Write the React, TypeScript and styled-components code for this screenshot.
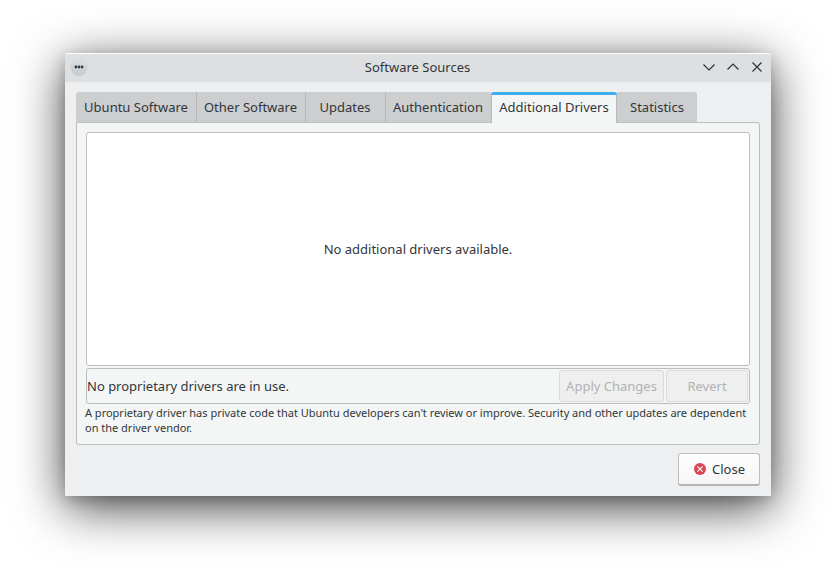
import React from "react";
import styled, { createGlobalStyle, css } from "styled-components";

const GlobalStyle = createGlobalStyle`
  * { box-sizing: border-box; }
  body {
    margin: 0;
    background: #fff;
    color: #31363b;
    font: 13px/18px "Noto Sans", sans-serif;
    overflow: hidden;
  }
  button { font: inherit; color: inherit; }
`;

const Desktop = styled.div`
  height: 573px;
  padding: 53px 65px 77px;
`;

const Window = styled.main`
  width: 706px;
  height: 443px;
  display: flex;
  flex-direction: column;
  border-radius: 4px 4px 0 0;
  background: #eeeff1;
  box-shadow: 0 11px 50px rgba(0, 0, 0, 0.75), 0 4px 14px rgba(0, 0, 0, 0.18);
`;

const TitleBar = styled.header`
  height: 29px;
  flex: none;
  display: grid;
  grid-template-columns: 80px 1fr 80px;
  align-items: center;
  padding: 0 6px 2px 5px;
  border-top: 1px solid #fff;
  border-radius: 4px 4px 0 0;
  background: #dedfe1;
`;

const Title = styled.h1`
  margin: 0;
  font-size: 13px;
  font-weight: 400;
  text-align: center;
`;

const AppMenu = styled.svg`
  display: block;
`;

const WindowControls = styled.div`
  display: flex;
  justify-content: flex-end;
  gap: 8px;
`;

const ControlIcon = styled.svg`
  width: 16px;
  height: 16px;
  fill: none;
  stroke: #2b3035;
  stroke-width: 1.15;
`;

const Body = styled.div`
  flex: 1;
  display: flex;
  flex-direction: column;
  padding: 10px 11px 0;
`;

const TabBar = styled.nav`
  display: flex;
  height: 31px;
  margin-bottom: -1px;
  z-index: 1;
`;

const Tab = styled.button<{ $width: number; $active?: boolean; $divider?: boolean }>`
  width: ${(p) => p.$width}px;
  height: 30px;
  padding: 0 1px 0 0;
  border: 0;
  border-right: ${(p) => (p.$divider ? "1px solid #b4b6b8" : "0")};
  background: #cdced0;
  white-space: nowrap;
  &:first-child { padding: 0; border-top-left-radius: 3px; }
  &:last-child { padding: 0; border-top-right-radius: 3px; }
  ${(p) =>
    p.$active &&
    css`
      height: 31px;
      padding: 0 0 1px;
      border-radius: 3px 3px 0 0;
      background:
        linear-gradient(#3daee9, #3daee9) top / 100% 3px no-repeat,
        linear-gradient(#b9bbbc, #b9bbbc) left / 1px 100% no-repeat,
        linear-gradient(#b9bbbc, #b9bbbc) right / 1px 100% no-repeat,
        #f4f6f5;
    `}
`;

const Pane = styled.section`
  height: 323px;
  display: flex;
  flex-direction: column;
  padding: 9px;
  border: 1px solid #bcbebf;
  border-radius: 0 3px 3px 3px;
  background: #f4f6f5;
`;

const DriverList = styled.div`
  height: 234px;
  flex: none;
  display: flex;
  align-items: center;
  justify-content: center;
  border: 1px solid #bbbdbe;
  border-radius: 3px;
  background: #fff;
`;

const StatusRow = styled.div`
  height: 36px;
  flex: none;
  margin-top: 2px;
  display: flex;
  align-items: center;
  gap: 2px;
  padding-right: 1px;
  border: 1px solid #bbbdbe;
  border-radius: 3px;
`;

const Status = styled.span`
  flex: 1;
`;

const ActionButton = styled.button<{ $width: number }>`
  width: ${(p) => p.$width}px;
  height: 32px;
  padding: 0;
  border: 1px solid #d9dbdb;
  border-radius: 3px;
  background: #efefef;
  white-space: nowrap;
  &:disabled { color: #b0b2b3; }
`;

const Note = styled.p`
  margin: 1px -1px 0;
  font-size: 11px;
  line-height: 15px;
  letter-spacing: -0.008px;
  white-space: nowrap;
`;

const Footer = styled.footer`
  display: flex;
  justify-content: flex-end;
  margin-top: 8px;
`;

const CloseButton = styled.button`
  width: 82px;
  height: 33px;
  display: flex;
  align-items: center;
  gap: 6px;
  padding: 0 0 0 15px;
  border: 1px solid #bcbebf;
  border-bottom: 2px solid #b3b5b6;
  border-radius: 3px;
  background: linear-gradient(#fdfdfd, #f6f6f7);
`;

const tabs = [
  { label: "Ubuntu Software", width: 121, divider: true },
  { label: "Other Software", width: 109, divider: true },
  { label: "Updates", width: 80, divider: true },
  { label: "Authentication", width: 105 },
  { label: "Additional Drivers", width: 126, active: true },
  { label: "Statistics", width: 80 },
];

export default function App() {
  return (
    <Desktop>
      <GlobalStyle />
      <Window>
        <TitleBar>
          <AppMenu width="18" height="18" viewBox="0 0 18 18">
            <defs>
              <linearGradient id="disc" x1="0" y1="0" x2="0" y2="1">
                <stop offset="0" stopColor="#dbe0e2" />
                <stop offset="1" stopColor="#c3cacf" />
              </linearGradient>
            </defs>
            <circle cx="9" cy="9" r="8.7" fill="url(#disc)" />
            <circle cx="5.9" cy="9" r="1.4" fill="#34383c" />
            <circle cx="9" cy="9" r="1.4" fill="#34383c" />
            <circle cx="12.1" cy="9" r="1.4" fill="#34383c" />
          </AppMenu>
          <Title>Software Sources</Title>
          <WindowControls>
            <ControlIcon viewBox="0 0 16 16">
              <path d="M2.5 5.5 8 11l5.5-5.5" />
            </ControlIcon>
            <ControlIcon viewBox="0 0 16 16">
              <path d="M2.5 10.5 8 5l5.5 5.5" />
            </ControlIcon>
            <ControlIcon viewBox="0 0 16 16">
              <path d="m3.5 3.5 9 9m0-9-9 9" />
            </ControlIcon>
          </WindowControls>
        </TitleBar>
        <Body>
          <TabBar>
            {tabs.map((t) => (
              <Tab key={t.label} $width={t.width} $active={t.active} $divider={t.divider}>
                {t.label}
              </Tab>
            ))}
          </TabBar>
          <Pane>
            <DriverList>No additional drivers available.</DriverList>
            <StatusRow>
              <Status>No proprietary drivers are in use.</Status>
              <ActionButton $width={105} disabled>Apply Changes</ActionButton>
              <ActionButton $width={82} disabled>Revert</ActionButton>
            </StatusRow>
            <Note>
              A proprietary driver has private code that Ubuntu developers can't review or improve. Security and other updates are dependent
              <br />
              on the driver vendor.
            </Note>
          </Pane>
          <Footer>
            <CloseButton>
              <svg width="12" height="12" viewBox="0 0 12 12">
                <circle cx="6" cy="6" r="6" fill="#da4453" />
                <path d="m3.3 3.3 5.4 5.4m0-5.4-5.4 5.4" stroke="#fff" strokeWidth="1.1" />
              </svg>
              Close
            </CloseButton>
          </Footer>
        </Body>
      </Window>
    </Desktop>
  );
}
